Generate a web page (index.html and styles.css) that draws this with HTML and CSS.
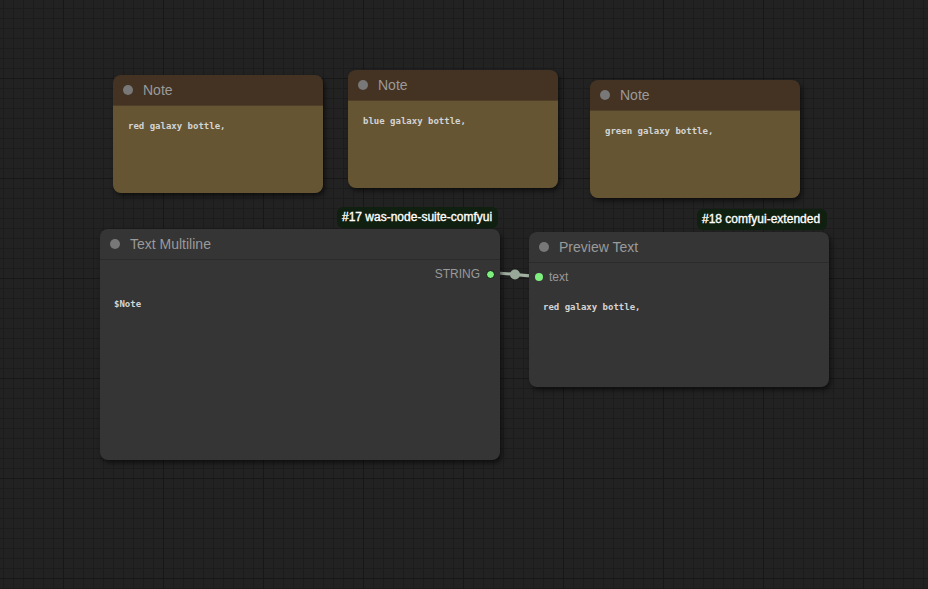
FILE: index.html
```html
<!DOCTYPE html>
<html>
<head>
<meta charset="utf-8">
<link rel="stylesheet" href="styles.css">
</head>
<body>
<div class="canvas">
  <svg class="links" width="928" height="589" viewBox="0 0 928 589">
    <path d="M491 273 C 515 273, 515 276, 539 276" class="link"/>
    <circle cx="515" cy="274.5" r="5" class="link-dot"/>
  </svg>

  <div class="node note n1">
    <div class="title"><span class="dot"></span><span class="name">Note</span></div>
    <div class="body"><div class="mono">red galaxy bottle,</div></div>
  </div>
  <div class="node note n2">
    <div class="title"><span class="dot"></span><span class="name">Note</span></div>
    <div class="body"><div class="mono">blue galaxy bottle,</div></div>
  </div>
  <div class="node note n3">
    <div class="title"><span class="dot"></span><span class="name">Note</span></div>
    <div class="body"><div class="mono">green galaxy bottle,</div></div>
  </div>

  <div class="badge b17">#17 was-node-suite-comfyui</div>
  <div class="node gray tm">
    <div class="title"><span class="dot"></span><span class="name">Text Multiline</span></div>
    <div class="body">
      <div class="slot out"><span class="label">STRING</span><span class="sdot bordered"></span></div>
      <div class="mono pad">$Note</div>
    </div>
  </div>

  <div class="badge b18">#18 comfyui-extended</div>
  <div class="node gray pv">
    <div class="title"><span class="dot"></span><span class="name">Preview Text</span></div>
    <div class="body">
      <div class="slot in"><span class="sdot"></span><span class="label">text</span></div>
      <div class="mono pad2">red galaxy bottle,</div>
    </div>
  </div>
</div>
</body>
</html>
```
FILE: styles.css
```css
html, body {
  margin: 0;
  padding: 0;
  width: 928px;
  height: 589px;
  overflow: hidden;
  background: #222222;
  font-family: "Liberation Sans", Arial, sans-serif;
}

.canvas {
  position: relative;
  width: 928px;
  height: 589px;
  background-color: #222222;
  background-image:
    linear-gradient(to right, #171717 1px, transparent 1px),
    linear-gradient(to bottom, #171717 1px, transparent 1px),
    linear-gradient(to right, #1c1c1c 1px, transparent 1px),
    linear-gradient(to bottom, #1c1c1c 1px, transparent 1px);
  background-size: 100px 100px, 100px 100px, 10px 10px, 10px 10px;
  background-position: 63px 78px, 63px 78px, 3px 8px, 3px 8px;
}

.links {
  position: absolute;
  left: 0;
  top: 0;
  z-index: 0;
}
.link {
  fill: none;
  stroke: #a3b2a3;
  stroke-width: 3;
}
.link-dot {
  fill: #98a898;
}

.node {
  position: absolute;
  z-index: 1;
  border-radius: 8px;
  box-shadow: 2px 3px 5px rgba(0, 0, 0, 0.55);
  display: flex;
  flex-direction: column;
  overflow: hidden;
}

.title {
  height: 30px;
  flex: 0 0 30px;
  display: flex;
  align-items: center;
  padding-left: 10px;
  box-sizing: border-box;
}
.dot {
  width: 10px;
  height: 10px;
  border-radius: 50%;
  background: #787878;
  margin-right: 10px;
}
.name {
  font-size: 14px;
  color: #9a9a9a;
}

.body {
  flex: 1;
}

.mono {
  font-family: "DejaVu Sans Mono", "Liberation Mono", monospace;
  font-size: 9px;
  font-weight: bold;
  line-height: 11px;
  color: #d4d4d4;
}

.note .title { background: #443322; }
.note .body {
  background: #665533;
  border-top: 1px solid #4f3e28;
  padding: 15px 15px 0;
}

.n1 { left: 113px; top: 75px; width: 210px; height: 118px; }
.n2 { left: 348px; top: 70px; width: 210px; height: 118px; }
.n3 { left: 590px; top: 80px; width: 210px; height: 118px; }

.gray { background: #353535; }
.gray .body { border-top: 1px solid #2b2b2b; }

.tm { left: 100px; top: 229px; width: 400px; height: 231px; }
.pv { left: 529px; top: 232px; width: 300px; height: 155px; }

.slot {
  height: 28px;
  display: flex;
  align-items: center;
  font-size: 12px;
  color: #999999;
}
.slot.out {
  justify-content: flex-end;
  padding-right: 5px;
}
.slot.out .label { margin-right: 6px; }
.slot.in { padding-left: 6px; }
.slot.in .label { margin-left: 6px; }

.sdot {
  width: 8px;
  height: 8px;
  border-radius: 50%;
  background: #7ff07f;
  box-sizing: border-box;
}
.sdot.bordered {
  width: 9px;
  height: 9px;
  border: 1px solid #111;
}

.pad { padding: 11px 14px 0; }
.pad2 { padding: 11px 14px 0; }

.badge {
  position: absolute;
  z-index: 2;
  height: 21px;
  line-height: 21px;
  padding: 0 5px;
  border-radius: 6px;
  background: #0f1f10;
  color: #ffffff;
  font-size: 12px;
  -webkit-text-stroke: 0.35px #ffffff;
  white-space: nowrap;
  box-sizing: border-box;
}
.b17 { left: 337px; top: 207px; width: 161px; }
.b18 { left: 697px; top: 209px; width: 130px; }
```
